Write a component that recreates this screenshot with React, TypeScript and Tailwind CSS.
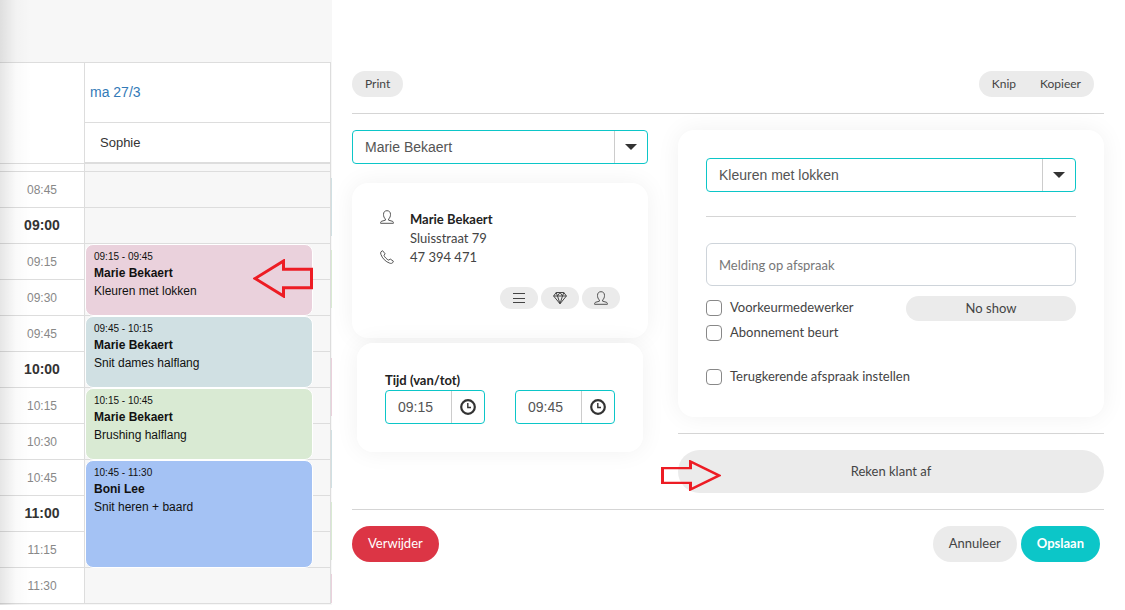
import type { ReactNode } from "react";

type Appointment = {
  time: string;
  client: string;
  service: string;
  className: string;
};

type Slot = { label: string; appointment?: Appointment };

const slots: Slot[] = [
  { label: "08:45" },
  { label: "09:00" },
  {
    label: "09:15",
    appointment: {
      time: "09:15 - 09:45",
      client: "Marie Bekaert",
      service: "Kleuren met lokken",
      className: "h-[72px] bg-[#ead1dc]",
    },
  },
  { label: "09:30" },
  {
    label: "09:45",
    appointment: {
      time: "09:45 - 10:15",
      client: "Marie Bekaert",
      service: "Snit dames halflang",
      className: "h-[72px] bg-[#d0e0e3]",
    },
  },
  { label: "10:00" },
  {
    label: "10:15",
    appointment: {
      time: "10:15 - 10:45",
      client: "Marie Bekaert",
      service: "Brushing halflang",
      className: "h-[72px] bg-[#d9ead3]",
    },
  },
  { label: "10:30" },
  {
    label: "10:45",
    appointment: {
      time: "10:45 - 11:30",
      client: "Boni Lee",
      service: "Snit heren + baard",
      className: "h-[108px] bg-[#a4c2f4]",
    },
  },
  { label: "11:00" },
  { label: "11:15" },
  { label: "11:30" },
];

// left edges of the appointments on the next day
const nextDay = [
  "h-[58px] bg-[#d0e0e3]",
  "h-[58px] bg-[#d9ead3]",
  "h-[22px]",
  "h-[58px] bg-[#ead1dc]",
  "h-[58px] bg-[#d0e0e3]",
  "h-[58px] bg-[#d9ead3]",
  "h-[29px] bg-[#ead1dc]",
];

const card = "rounded-2xl bg-white shadow-[0_0_24px_rgba(0,0,0,0.06)]";
const pill = "flex items-center justify-center rounded-full bg-[#ebebeb]";
const combo =
  "flex h-[34px] overflow-hidden rounded border border-[#0cc6c8] bg-white font-['Liberation_Sans',sans-serif] text-sm text-[#555]";

function UserIcon() {
  return (
    <svg viewBox="0 0 14 14" width="14" height="14" fill="none" stroke="currentColor" strokeWidth="0.9" aria-hidden="true">
      <path d="M5.4 9C4.100 8 3.500 6.200 3.500 4.400 3.500 2 4.900.7 7 .7s3.500 1.300 3.500 3.700c0 1.800-.6 3.600-1.900 4.600v1.200l3.600 1c.8.3 1.200.7 1.200 1.400v.7H.6v-.7c0-.7.4-1.100 1.200-1.400l3.600-1z" />
    </svg>
  );
}

function PhoneIcon() {
  return (
    <svg viewBox="0 0 14 14" width="14" height="14" fill="none" stroke="currentColor" strokeWidth="0.9" aria-hidden="true">
      <path d="M1 1.8 2.600.7l2.600 3.200-1.300 1.300c.6 1.800 2.800 4.200 4.900 5l1.400-1.200 3.200 2.200-.8 1.600c-.6.6-1.600.8-2.800.4C5.600 11.800 2.200 8.200.9 4.400.5 3.200.5 2.500 1 1.800z" />
    </svg>
  );
}

function DiamondIcon() {
  return (
    <svg viewBox="0 0 14 14" width="14" height="14" fill="none" stroke="currentColor" strokeLinejoin="round" aria-hidden="true">
      <path d="M3.200 1.500h7.600L13.400 5 7 12.800.6 5zM.6 5h12.800M3.200 1.500 4.500 5 7 12.800 9.500 5l1.300-3.500M4.500 5 7 1.500 9.500 5" />
    </svg>
  );
}

function ClockIcon() {
  return (
    <svg viewBox="0 0 16 16" width="16" height="16" fill="none" stroke="#333" aria-hidden="true">
      <circle cx="8" cy="8" r="6.8" strokeWidth="2.2" />
      <path d="M7.800 4v4.500h3.200" strokeWidth="1.4" />
    </svg>
  );
}

function Arrow({ className }: { className: string }) {
  return (
    <svg className={className} viewBox="0 0 60 40" fill="none" stroke="#ed1c24" strokeWidth="3" preserveAspectRatio="none" aria-hidden="true">
      <path d="M58.500 10.500H30.500V2L2 20l28.500 18v-8.500h28z" />
    </svg>
  );
}

function Calendar() {
  return (
    <section className="relative w-[332px] shrink-0 overflow-hidden bg-[#f7f7f7] pt-[62px] pr-px font-['Liberation_Sans',sans-serif]">
      <table className="w-full table-fixed border-separate border-spacing-0 text-left">
        <thead>
          <tr>
            <td rowSpan={2} className="w-[84px] border-t border-b border-[#ddd] bg-white" />
            <th className="h-[60px] border-t border-r border-l border-[#ddd] bg-white px-[5px] pb-[2px] text-sm font-normal">
              <a href="#dag" className="text-[#337ab7]">ma 27/3</a>
            </th>
          </tr>
          <tr>
            <th className="h-[42px] border-t border-r border-b-2 border-l border-[#ddd] bg-white px-[15px] text-[13px] font-normal text-[#333]">
              Sophie
            </th>
          </tr>
        </thead>
        <tbody>
          <tr>
            <td className="h-[7px] bg-white" />
            <td className="border-r border-l border-[#ddd]" />
          </tr>
          {slots.map(({ label, appointment }) => (
            <tr key={label}>
              <th
                scope="row"
                className={
                  label.endsWith(":00")
                    ? "h-9 border-t border-[#ddd] bg-white p-0 pb-[2px] text-center text-sm font-bold text-[#333]"
                    : "h-9 border-t border-[#ddd] bg-white p-0 text-center text-xs font-normal text-[#888]"
                }
              >
                {label}
              </th>
              <td className="relative border-t border-r border-l border-[#ddd] p-0">
                {appointment && (
                  <div
                    className={`absolute top-0 right-[17px] left-0 z-10 rounded-lg border border-white px-2 pt-1 text-xs text-[#111] ${appointment.className}`}
                  >
                    <p className="text-[10px] leading-4">{appointment.time}</p>
                    <p className="leading-4 font-bold">{appointment.client}</p>
                    <p className="leading-5">{appointment.service}</p>
                  </div>
                )}
              </td>
            </tr>
          ))}
        </tbody>
      </table>
      <div className="h-[2px] border-t border-[#ddd]" />
      <div className="absolute top-[178px] right-0 flex w-px flex-col gap-[14px]">
        {nextDay.map((edge, i) => (
          <span key={i} className={edge} />
        ))}
      </div>
      <div className="pointer-events-none absolute inset-y-0 left-0 w-8 bg-linear-to-r from-black/10 via-black/2 via-50% to-transparent" />
      <Arrow className="absolute top-[259px] left-[253px] z-20 h-[39px] w-[60px]" />
    </section>
  );
}

function Combo({ label, value, options }: { label: string; value: string; options: string[] }) {
  return (
    <div className={`${combo} relative`}>
      <select aria-label={label} defaultValue={value} className="w-full appearance-none px-3 outline-none">
        {options.map((option) => (
          <option key={option}>{option}</option>
        ))}
      </select>
      <span className="pointer-events-none absolute inset-y-0 right-0 grid w-[33px] place-items-center border-l border-[#ccc]">
        <svg viewBox="0 0 12 6" width="12" height="6" fill="#333" aria-hidden="true">
          <path d="M0 0h12L6 6z" />
        </svg>
      </span>
    </div>
  );
}

function TimeField({ label, value }: { label: string; value: string }) {
  return (
    <div className={`${combo} w-[100px]`}>
      <input aria-label={label} defaultValue={value} className="min-w-0 flex-1 pl-3 outline-none" />
      <button type="button" aria-label={`${label} kiezen`} className="grid w-[33px] place-items-center border-l border-[#ccc]">
        <ClockIcon />
      </button>
    </div>
  );
}

function Checkbox({ children }: { children: ReactNode }) {
  return (
    <label className="flex h-6 items-center gap-2">
      <input type="checkbox" className="size-4 appearance-none rounded border border-[#888] bg-white" />
      {children}
    </label>
  );
}

function ClientColumn() {
  return (
    <div className="w-[296px] shrink-0">
      <Combo label="Klant" value="Marie Bekaert" options={["Marie Bekaert", "Boni Lee"]} />

      <div className={`${card} mt-[19px] h-[155px] px-7 pt-[27px]`}>
        <div className="flex gap-4">
          <div className="flex flex-col gap-[26px]">
            <UserIcon />
            <PhoneIcon />
          </div>
          <address className="leading-[19px] not-italic">
            <strong className="block text-[#222]">Marie Bekaert</strong>
            Sluisstraat 79
            <br />
            47 394 471
          </address>
        </div>
        <div className="mt-5 flex justify-end gap-[3px]">
          <button type="button" aria-label="Lijst" className={`${pill} h-[22px] w-[38px]`}>
            <svg viewBox="0 0 14 14" width="14" height="14" stroke="currentColor" aria-hidden="true">
              <path d="M1 2.500h12M1 7.500h12M1 11.500h12" />
            </svg>
          </button>
          <button type="button" aria-label="Voordelen" className={`${pill} h-[22px] w-[38px]`}>
            <DiamondIcon />
          </button>
          <button type="button" aria-label="Klantfiche" className={`${pill} h-[22px] w-[38px]`}>
            <UserIcon />
          </button>
        </div>
      </div>

      <fieldset className={`${card} mx-[5px] mt-[5px] h-[109px] px-7 pt-7`}>
        <legend className="float-left w-full leading-[19px] font-bold text-[#222]">Tijd (van/tot)</legend>
        <div className="clear-both flex gap-[30px]">
          <TimeField label="Van" value="09:15" />
          <TimeField label="Tot" value="09:45" />
        </div>
      </fieldset>
    </div>
  );
}

function ServiceColumn() {
  return (
    <div className="flex-1">
      <div className={`${card} p-7`}>
        <Combo
          label="Behandeling"
          value="Kleuren met lokken"
          options={["Kleuren met lokken", "Snit dames halflang", "Brushing halflang", "Snit heren + baard"]}
        />
        <hr className="mt-6 mb-[26px] border-[#d5d5d5]" />
        <input
          aria-label="Melding op afspraak"
          placeholder="Melding op afspraak"
          className="block h-[43px] w-full rounded-md border border-[#ced4da] px-3 outline-none placeholder:text-[#777]"
        />
        <div className="mt-[10px] flex gap-4">
          <div className="flex-1 space-y-px">
            <Checkbox>Voorkeurmedewerker</Checkbox>
            <Checkbox>Abonnement beurt</Checkbox>
          </div>
          <button type="button" className={`${pill} h-[25px] w-[170px]`}>No show</button>
        </div>
        <div className="mt-5">
          <Checkbox>Terugkerende afspraak instellen</Checkbox>
        </div>
      </div>
      <hr className="my-4 border-[#d5d5d5]" />
      <div className="relative">
        <button type="button" className={`${pill} h-[43px] w-full`}>Reken klant af</button>
        <Arrow className="absolute top-[10px] -left-[17px] h-[31px] w-[60px] rotate-180" />
      </div>
    </div>
  );
}

export default function App() {
  return (
    <div className="flex min-h-screen items-start bg-white">
      <Calendar />
      <main className="mr-[21px] ml-5 flex-1 pt-[71px] font-[Lato,sans-serif] text-[13px] text-[#444]">
        <div className="flex justify-between pr-[10px] text-xs">
          <button type="button" className={`${pill} h-[26px] px-[13px]`}>Print</button>
          <div className={`${pill} h-[26px] gap-6 px-[13px]`}>
            <button type="button">Knip</button>
            <button type="button">Kopieer</button>
          </div>
        </div>
        <hr className="my-4 border-[#d5d5d5]" />
        <div className="flex gap-[30px]">
          <ClientColumn />
          <ServiceColumn />
        </div>
        <hr className="my-4 border-[#d5d5d5]" />
        <div className="flex items-center gap-1 pr-1">
          <button type="button" className="mr-auto h-9 rounded-full bg-[#dc3545] px-4 text-white">Verwijder</button>
          <button type="button" className={`${pill} h-9 px-4`}>Annuleer</button>
          <button type="button" className="h-9 rounded-full bg-[#0cc6c8] px-4 font-bold text-white">Opslaan</button>
        </div>
      </main>
    </div>
  );
}
